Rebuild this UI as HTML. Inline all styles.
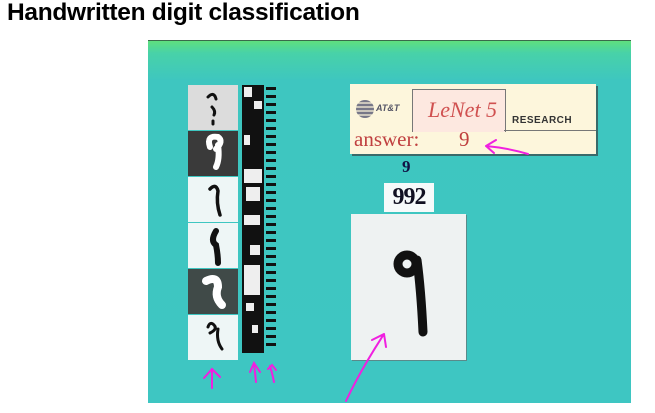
<!DOCTYPE html>
<html><head><meta charset="utf-8"><style>
body{margin:0;width:655px;height:413px;background:#fff;position:relative;overflow:hidden;font-family:"Liberation Sans",sans-serif}
.a{position:absolute}
h1{position:absolute;left:7px;top:-1px;margin:0;font-size:24.5px;font-weight:bold;color:#000;letter-spacing:-0.3px;white-space:nowrap}
#f{left:148px;top:40px;width:483px;height:362px;background:linear-gradient(180deg,#5fe07e 0px,#48d2a8 12px,#3ec6c0 40px,#3ec6c2 100%);border-top:1px solid #3a6a4a}
.t{position:absolute;left:40px;width:50px;height:45px}
</style></head><body>
<h1>Handwritten digit classification</h1>
<div class="a" id="f">
 <div class="t" style="top:44px;background:#dcdcdc"></div>
 <div class="t" style="top:90px;background:#3a3a3a"></div>
 <div class="t" style="top:136px;background:#eef6f6"></div>
 <div class="t" style="top:182px;background:#eef6f6"></div>
 <div class="t" style="top:228px;background:#404a48"></div>
 <div class="t" style="top:274px;background:#eef6f6"></div>
 <svg class="a" style="left:40px;top:44px" width="50" height="276" viewBox="0 0 50 276">
  <g fill="none" stroke-linecap="round">
   <path d="M20 12 q6-6 8 2 M24 22 q4 4 2 8 M25 36v3" stroke="#111" stroke-width="3"/>
   <g transform="translate(0,46)"><path d="M22 16 q-4-12 8-10 q6 4 -2 12 M30 14 q2 14 -2 22" stroke="#fff" stroke-width="6"/></g>
   <g transform="translate(0,92)"><path d="M22 12 q6-6 8 2 q-2 12 2 24" stroke="#111" stroke-width="3.5"/></g>
   <g transform="translate(0,138)"><path d="M28 8 q-6 10 0 14 q2 10 2 18" stroke="#111" stroke-width="6"/></g>
   <g transform="translate(0,184)"><path d="M18 12 q12-6 12 6 q-4 10 4 18" stroke="#fff" stroke-width="8"/></g>
   <g transform="translate(0,230)"><path d="M20 12 q2-6 6-2 q4 4 -4 8 M30 14 q-2 12 4 20" stroke="#111" stroke-width="3"/></g>
  </g>
 </svg>
 <svg class="a" style="left:94px;top:44px" width="36" height="278" viewBox="0 0 36 278">
  <rect x="0" y="0" width="22" height="268" fill="#111"/>
  <g fill="#eee">
   <rect x="2" y="2" width="8" height="10"/><rect x="12" y="16" width="8" height="8"/><rect x="2" y="50" width="6" height="10"/>
   <rect x="2" y="84" width="18" height="14"/><rect x="4" y="102" width="14" height="14"/><rect x="2" y="130" width="16" height="10"/>
   <rect x="8" y="160" width="10" height="10"/><rect x="2" y="180" width="16" height="30"/><rect x="4" y="218" width="8" height="8"/>
   <rect x="10" y="240" width="6" height="8"/>
  </g>
  <g fill="#111">
   <rect x="24" y="2" width="10" height="3"/><rect x="24" y="10" width="10" height="3"/><rect x="24" y="18" width="10" height="3"/><rect x="24" y="26" width="10" height="3"/><rect x="24" y="34" width="10" height="3"/><rect x="24" y="42" width="10" height="3"/><rect x="24" y="50" width="10" height="3"/><rect x="24" y="58" width="10" height="3"/><rect x="24" y="66" width="10" height="3"/><rect x="24" y="74" width="10" height="3"/><rect x="24" y="82" width="10" height="3"/><rect x="24" y="90" width="10" height="3"/><rect x="24" y="98" width="10" height="3"/><rect x="24" y="106" width="10" height="3"/><rect x="24" y="114" width="10" height="3"/><rect x="24" y="122" width="10" height="3"/><rect x="24" y="130" width="10" height="3"/><rect x="24" y="138" width="10" height="3"/><rect x="24" y="146" width="10" height="3"/><rect x="24" y="154" width="10" height="3"/><rect x="24" y="162" width="10" height="3"/><rect x="24" y="170" width="10" height="3"/><rect x="24" y="178" width="10" height="3"/><rect x="24" y="186" width="10" height="3"/><rect x="24" y="194" width="10" height="3"/><rect x="24" y="202" width="10" height="3"/><rect x="24" y="210" width="10" height="3"/><rect x="24" y="218" width="10" height="3"/><rect x="24" y="226" width="10" height="3"/><rect x="24" y="234" width="10" height="3"/><rect x="24" y="242" width="10" height="3"/><rect x="24" y="250" width="10" height="3"/><rect x="24" y="258" width="10" height="3"/>
  </g>
 </svg>
 <div class="a" style="left:202px;top:43px;width:246px;height:70px;background:#fdf6dc;box-shadow:2px 2px 0 #3a6a6a"></div>
 <div class="a" style="left:264px;top:48px;width:92px;height:42px;border:1px solid #777;border-bottom:none;background:#fde8e0"></div>
 <div class="a" style="left:356px;top:89px;width:92px;height:1px;background:#777"></div>
 <svg class="a" style="left:207px;top:58px" width="20" height="20"><circle cx="10" cy="10" r="9" fill="#778"/><g stroke="#fdf6dc" stroke-width="1.3"><path d="M0 4h20M0 8h20M0 12h20M0 16h20"/></g></svg>
 <div class="a" style="left:228px;top:62px;font-size:9px;font-weight:bold;font-style:italic;color:#556">AT&amp;T</div>
 <div class="a" style="left:280px;top:56px;font-family:'Liberation Serif',serif;font-style:italic;font-size:22px;color:#d05050">LeNet 5</div>
 <div class="a" style="left:364px;top:74px;font-size:10px;font-weight:bold;color:#333;letter-spacing:0.5px">RESEARCH</div>
 <div class="a" style="left:206px;top:86px;font-family:'Liberation Serif',serif;font-size:21px;color:#c04040">answer:</div>
 <div class="a" style="left:311px;top:86px;font-family:'Liberation Serif',serif;font-size:21px;color:#c04040">9</div>
 <div class="a" style="left:254px;top:116px;font-family:'Liberation Serif',serif;font-weight:bold;font-size:17px;color:#114">9</div>
 <div class="a" style="left:236px;top:142px;width:50px;height:29px;background:#f6fafa;font-family:'Liberation Serif',serif;font-weight:bold;font-size:24px;color:#112;line-height:29px;text-align:center;letter-spacing:-1px">992</div>
 <div class="a" style="left:203px;top:173px;width:115px;height:146px;background:#eef2f2;box-shadow:1px 1px 0 #5a8a8a"></div>
 <svg class="a" style="left:203px;top:173px" width="115" height="146"><g fill="none" stroke="#111" stroke-linecap="round"><circle cx="56" cy="50" r="9" stroke-width="9"/><path d="M66 46 q4 30 6 72" stroke="#111" stroke-width="9"/></g></svg>
 <svg class="a" style="left:0;top:0" width="483" height="362"><g fill="none" stroke="#f020e0" stroke-width="2" stroke-linecap="round">
  <path d="M380 113 q-20-6 -42-8 M338 105 l10-6 M338 105 l8 7"/>
  <path d="M198 360 q14-30 38-67 M236 293 l-12 6 M236 293 l2 13"/>
  <path d="M64 347 v-18 M56 337 l8-9 l8 8"/>
  <path d="M108 341 l-2-19 M102 331 l4-9 l6 9"/>
  <path d="M126 341 q-2-10 -4-16 M120 328 l4-4 l4 5"/>
 </g></svg>
</div>
</body></html>
